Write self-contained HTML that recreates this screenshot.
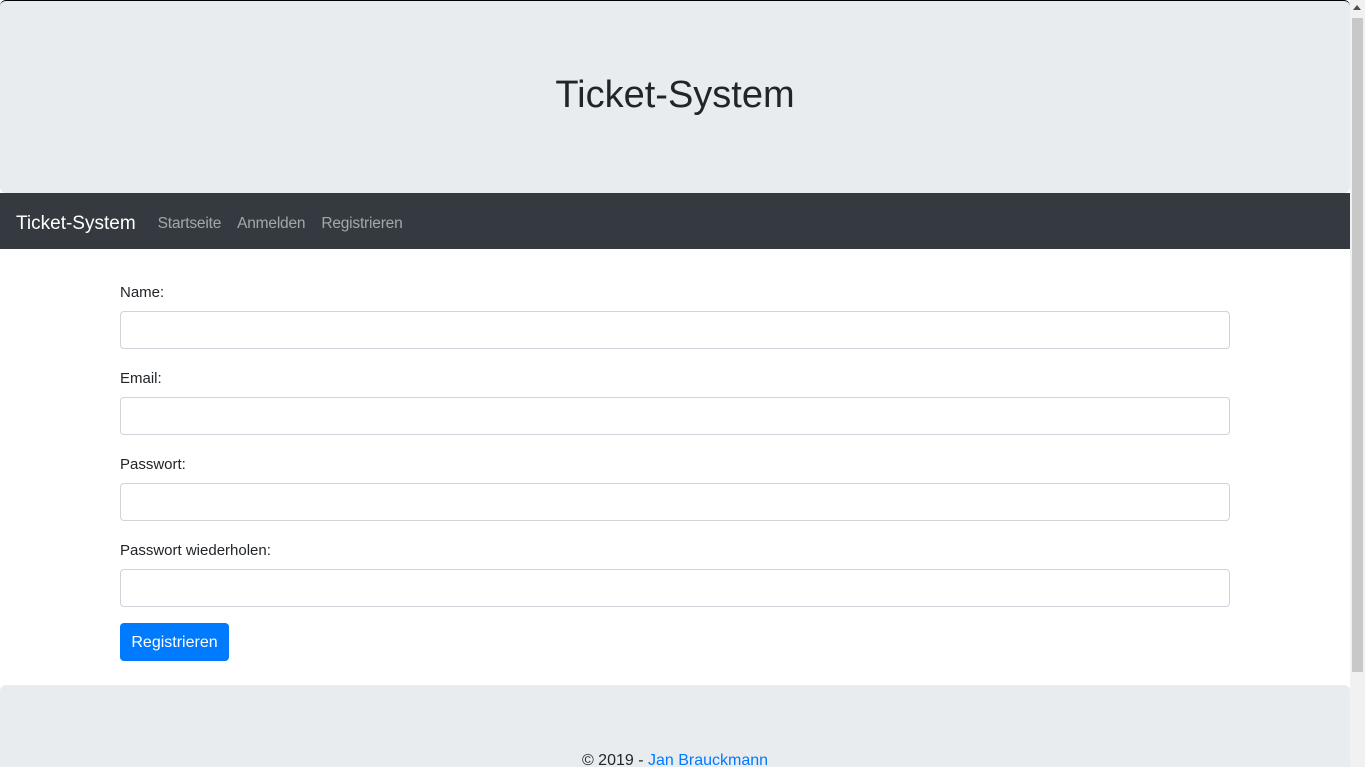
<!DOCTYPE html>
<html style="overflow:hidden;height:767px"><head><meta charset="utf-8"><style>
*{box-sizing:border-box}
body{margin:0;width:1365px;height:767px;overflow:hidden;font-family:"Liberation Sans",sans-serif;color:#212529;font-size:16px;background:#fff;position:relative}
.main{position:absolute;left:0;top:0;width:1350px}
.jt{background:#e9ecef;border-radius:6px;height:193px;border-top:1px solid #000;text-align:center}
.jt h1{margin:0;padding-top:70px;font-weight:300;font-size:38px;line-height:48px}
.nav{background:#343a40;height:56px;display:flex;align-items:center;padding-left:16px;padding-top:6px}
.brand{color:#fff;font-size:19px;margin-right:22px}
.nav a{color:rgba(255,255,255,.55);margin-right:16px;font-size:15.5px;letter-spacing:-.2px}
.form{position:absolute;left:120px;top:249px;width:1110px}
label{display:block;position:absolute;left:0;font-size:15px}
.in{position:absolute;left:0;width:1110px;height:38px;border:1px solid #ced4da;border-radius:4px}
.btn{position:absolute;left:0;top:374px;width:109px;height:38px;background:#007bff;color:#fff;border-radius:4px;text-align:center;line-height:40px;font-size:16px}
.ft{position:absolute;left:0;top:685px;width:1350px;height:82px;background:#e9ecef;border-radius:6px 6px 0 0;text-align:center;padding-top:67px;overflow:hidden}
.ft a{color:#007bff}
.sb{position:absolute;right:0;top:0;width:15px;height:767px;background:#f1f1f1}
.th{position:absolute;right:2px;top:18px;width:11px;height:654px;background:#c8c8c8}
</style></head><body>
<div class="main">
<div class="jt"><h1>Ticket-System</h1></div>
<div class="nav"><span class="brand">Ticket-System</span><a>Startseite</a><a>Anmelden</a><a>Registrieren</a></div>
</div>
<div class="form">
<label style="top:35px">Name:</label><div class="in" style="top:62px"></div>
<label style="top:121px">Email:</label><div class="in" style="top:148px"></div>
<label style="top:207px">Passwort:</label><div class="in" style="top:234px"></div>
<label style="top:293px">Passwort wiederholen:</label><div class="in" style="top:320px"></div>
<div class="btn">Registrieren</div>
</div>
<div class="ft">© 2019 - <a>Jan Brauckmann</a></div>
<div class="sb"><div class="th"></div><div style="position:absolute;left:3px;top:5px;border:4px solid transparent;border-bottom:5px solid #505050;border-top:0"></div></div>
</body></html>
